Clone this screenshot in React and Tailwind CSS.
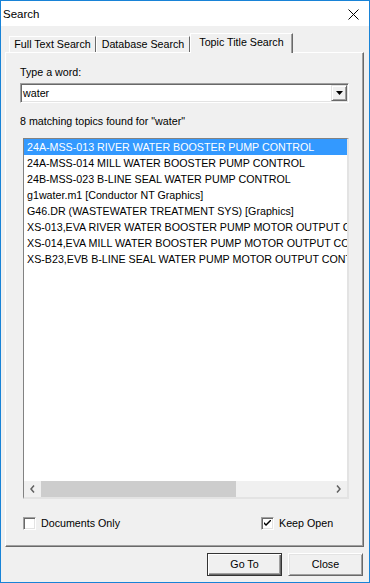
export default function App() {
  const items = [
    "24A-MSS-013 RIVER WATER BOOSTER PUMP CONTROL",
    "24A-MSS-014 MILL WATER BOOSTER PUMP CONTROL",
    "24B-MSS-023 B-LINE SEAL WATER PUMP CONTROL",
    "g1water.m1 [Conductor NT Graphics]",
    "G46.DR (WASTEWATER TREATMENT SYS) [Graphics]",
    "XS-013,EVA RIVER WATER BOOSTER PUMP MOTOR OUTPUT CONTROL",
    "XS-014,EVA MILL WATER BOOSTER PUMP MOTOR OUTPUT CONTROL",
    "XS-B23,EVB B-LINE SEAL WATER PUMP MOTOR OUTPUT CONTROL",
  ];
  return (
    <div className="w-[370px] h-[583px] bg-[#f0f0f0] border border-[#1883d7] flex flex-col font-['Liberation_Sans',Arial,sans-serif] text-[10.7px] text-black overflow-hidden">
      {/* Title bar */}
      <div className="h-[25px] shrink-0 bg-white flex items-center justify-between pl-[2px] pr-[10px]">
        <span className="text-[11.5px] leading-[14px]">Search</span>
        <svg width="11" height="11" viewBox="0 0 11 11" className="mt-[1px]">
          <path d="M0.5 0.5 L10.5 10.5 M10.5 0.5 L0.5 10.5" stroke="#000" strokeWidth="1" fill="none" />
        </svg>
      </div>

      {/* Tabs */}
      <div className="mt-[7px] h-[20px] shrink-0 flex items-end pl-[8px]">
        <div className="mb-[1px] h-[16px] w-[87px] flex items-center justify-center leading-[13px] border-t border-l border-r border-t-white border-l-white border-r-[#696969]">
          Full Text Search
        </div>
        <div className="mb-[1px] h-[16px] w-[94px] flex items-center justify-center leading-[13px] border-t border-l border-r border-t-white border-l-white border-r-[#696969]">
          Database Search
        </div>
        <div className="relative z-10 h-[20px] w-[103px] pb-[2px] flex items-center justify-center leading-[13px] bg-[#f0f0f0] border-t border-l border-r border-t-white border-l-white border-r-[#696969] shadow-[inset_-1px_0_0_#a0a0a0]">
          Topic Title Search
        </div>
      </div>

      {/* Panel */}
      <div className="mt-[-1px] ml-[4px] w-[359px] h-[495px] shrink-0 flex flex-col border-t border-l border-r border-b border-t-white border-l-white border-r-[#696969] border-b-[#696969] shadow-[inset_-1px_-1px_0_#a0a0a0]">
        <div className="pt-[13px] pl-[14px] leading-[13px]">Type a word:</div>

        <div className="ml-[14px] mt-[4px] w-[329px] h-[20px] bg-white flex items-center border border-t-[#a0a0a0] border-l-[#a0a0a0] border-r-white border-b-white shadow-[inset_1px_1px_0_#696969,inset_-1px_-1px_0_#e3e3e3]">
          <span className="flex-1 pl-[2px] leading-[13px]">water</span>
          <div className="mr-[1px] w-[16px] h-[16px] bg-[#f0f0f0] flex items-center justify-center border border-t-[#e3e3e3] border-l-[#e3e3e3] border-r-[#696969] border-b-[#696969] shadow-[inset_1px_1px_0_#fff,inset_-1px_-1px_0_#a0a0a0]">
            <svg width="7" height="4" viewBox="0 0 7 4">
              <polygon points="0,0 7,0 3.5,4" fill="#000" />
            </svg>
          </div>
        </div>

        <div className="mt-[12px] pl-[14px] leading-[13px]">8 matching topics found for "water"</div>

        {/* List */}
        <div className="ml-[17px] mt-[10px] w-[326px] h-[361px] bg-white flex flex-col border-t border-l border-r-2 border-b-2 border-t-[#828282] border-l-[#828282] border-r-[#e3e3e3] border-b-[#e3e3e3]">
          <div className="flex-1 overflow-hidden">
            {items.map((t, i) => (
              <div
                key={i}
                className={
                  i === 0
                    ? "h-[16px] leading-[16px] pl-[3px] whitespace-nowrap bg-[#3399ff] text-white"
                    : "h-[16px] leading-[16px] pl-[3px] whitespace-nowrap"
                }
              >
                {t}
              </div>
            ))}
          </div>
          <div className="h-[16px] shrink-0 flex bg-[#f0f0f0]">
            <div className="w-[17px] flex items-center justify-center">
              <svg width="5" height="8" viewBox="0 0 5 8">
                <polyline points="4,0.5 1,4 4,7.5" fill="none" stroke="#606060" strokeWidth="1.5" />
              </svg>
            </div>
            <div className="w-[195px] bg-[#cdcdcd]"></div>
            <div className="flex-1"></div>
            <div className="w-[17px] flex items-center justify-center">
              <svg width="5" height="8" viewBox="0 0 5 8">
                <polyline points="1,0.5 4,4 1,7.5" fill="none" stroke="#606060" strokeWidth="1.5" />
              </svg>
            </div>
          </div>
        </div>

        {/* Checkboxes */}
        <div className="mt-[18px] pl-[17px] h-[13px] flex items-center">
          <div className="w-[238px] flex items-center gap-[5px]">
            <div className="w-[13px] h-[13px] bg-white border border-t-[#a0a0a0] border-l-[#a0a0a0] border-r-white border-b-white shadow-[inset_1px_1px_0_#696969,inset_-1px_-1px_0_#e3e3e3]"></div>
            <span className="leading-[13px]">Documents Only</span>
          </div>
          <div className="flex items-center gap-[5px]">
            <div className="w-[13px] h-[13px] bg-white flex items-center justify-center border border-t-[#a0a0a0] border-l-[#a0a0a0] border-r-white border-b-white shadow-[inset_1px_1px_0_#696969,inset_-1px_-1px_0_#e3e3e3]">
              <svg width="7" height="7" viewBox="0 0 7 7">
                <path d="M0 2 L0 4 L2 6 L7 1 L7 -1 L2 4 Z" fill="#000" />
              </svg>
            </div>
            <span className="leading-[13px]">Keep Open</span>
          </div>
        </div>
      </div>

      {/* Buttons */}
      <div className="mt-[6px] flex justify-end gap-[6px] pr-[6px]">
        <div className="w-[75px] h-[23px] flex items-center justify-center bg-[#f0f0f0] border border-[#333] shadow-[inset_1px_1px_0_#fff,inset_-1px_-1px_0_#696969,inset_-2px_-2px_0_#a0a0a0]">
          <span className="leading-[13px]">Go To</span>
        </div>
        <div className="w-[75px] h-[23px] flex items-center justify-center bg-[#f0f0f0] border border-t-white border-l-white border-r-[#696969] border-b-[#696969] shadow-[inset_1px_1px_0_#e3e3e3,inset_-1px_-1px_0_#a0a0a0]">
          <span className="leading-[13px]">Close</span>
        </div>
      </div>
    </div>
  );
}
